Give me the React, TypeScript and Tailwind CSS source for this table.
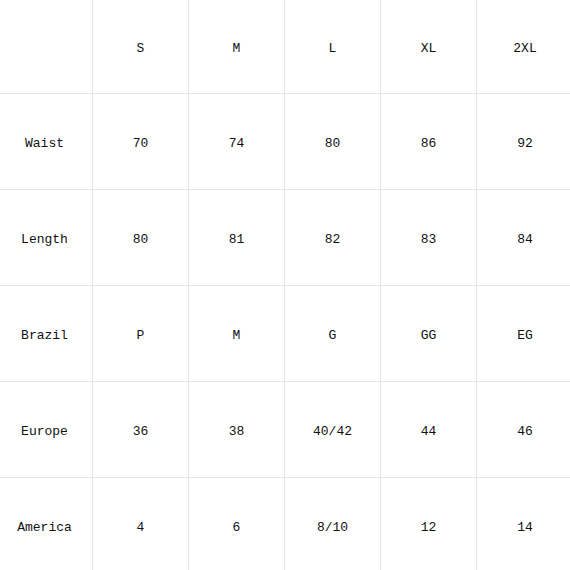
import React from 'react';

const header = ['', 'S', 'M', 'L', 'XL', '2XL'];

const rows: string[][] = [
  ['Waist', '70', '74', '80', '86', '92'],
  ['Length', '80', '81', '82', '83', '84'],
  ['Brazil', 'P', 'M', 'G', 'GG', 'EG'],
  ['Europe', '36', '38', '40/42', '44', '46'],
  ['America', '4', '6', '8/10', '12', '14'],
];

export default function App() {
  const all = [header, ...rows];
  return (
    <div className="w-[570px] h-[570px] overflow-hidden bg-white">
      <div
        className="grid grid-cols-[93px_96px_96px_96px_96px_96px] grid-rows-[94px_96px_96px_96px_96px_96px] text-[13px] text-[#111]"
        style={{ fontFamily: '"Liberation Mono", "Noto Sans CJK SC", monospace' }}
      >
        {all.map((row, r) =>
          row.map((cell, c) => (
            <div
              key={`${r}-${c}`}
              className={`flex items-center justify-center pt-1 border-[#e6e6e6] ${c === 0 ? 'pr-[3px]' : ''} ${c < 5 ? 'border-r' : ''} ${r < 5 ? 'border-b' : ''}`}
            >
              {cell}
            </div>
          ))
        )}
      </div>
    </div>
  );
}
